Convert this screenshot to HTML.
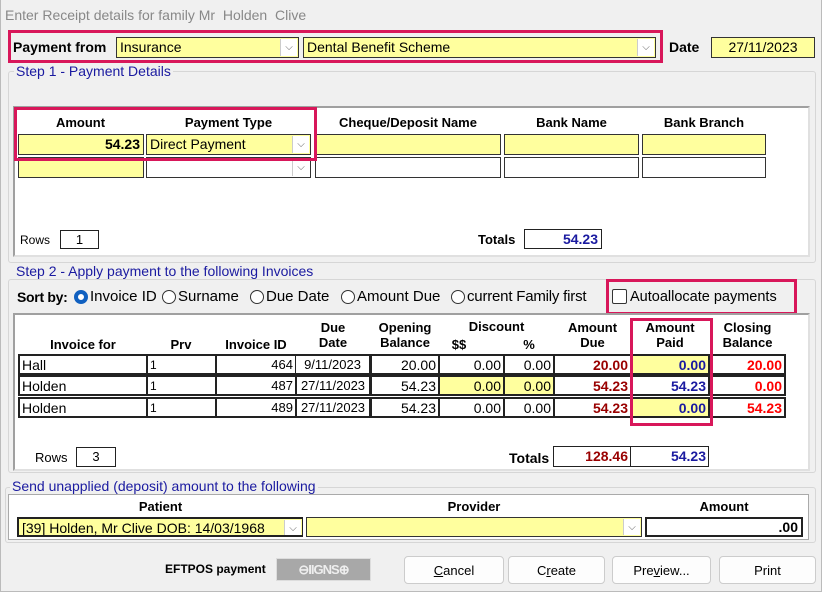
<!DOCTYPE html>
<html><head><style>
*{box-sizing:border-box;margin:0;padding:0}
body{width:822px;height:592px;background:#f0f0f0;font-family:"Liberation Sans",Arial,sans-serif;font-size:13px;color:#000;position:relative;overflow:hidden}
.a{position:absolute}
.f{position:absolute;border:1px solid #333;background:#ffff9e;height:21px;line-height:19px;padding:0 3px;font-size:14px;white-space:nowrap;overflow:hidden}
.w{background:#fff}
.dd{position:absolute;right:1px;top:1px;width:17px;height:17px;background:#fff;border-left:1px solid #ccc;color:#666;font-size:10px;text-align:center;line-height:17px}
.pink{position:absolute;border:3px solid #d8175a}
.grp{position:absolute;border:1px solid #d6d6d6;border-radius:3px}
.gl{position:absolute;color:#1a1aa0;font-size:14px;background:#f0f0f0;padding:0 2px}
.pan{position:absolute;background:#fff;border:2px solid #a0a0a0;border-right-color:#e0e0e0;border-bottom-color:#e0e0e0}
.h{position:absolute;font-weight:bold;font-size:13px;text-align:center}
.c{position:absolute;border:2px solid #222;height:21px;line-height:18px;font-size:14px;padding:0 2px;text-align:right;white-space:nowrap;overflow:hidden}
.btn{position:absolute;top:556px;height:28px;background:#fdfdfd;border:1px solid #ccc;border-radius:4px;text-align:center;line-height:27px;font-size:13px}
.rad{position:absolute;top:290px;width:14px;height:14px;border:1px solid #333;border-radius:50%;background:#fff}
.rt{position:absolute;top:288px;font-size:15px;white-space:nowrap}
</style></head><body>
<div class="a" style="left:0;top:0;width:822px;height:592px;border:1px solid #bbb;border-top:none"></div>
<div class="a" style="left:5px;top:7px;color:#888;font-size:14px">Enter Receipt details for family Mr&nbsp; Holden&nbsp; Clive</div>

<div class="pink" style="left:8px;top:30px;width:655px;height:33px"></div>
<div class="a" style="left:13px;top:39px;font-weight:bold;font-size:14px">Payment from</div>
<div class="f" style="left:116px;top:37px;width:183px">Insurance<div class="dd">⌵</div></div>
<div class="f" style="left:303px;top:37px;width:353px">Dental Benefit Scheme<div class="dd">⌵</div></div>
<div class="a" style="left:669px;top:39px;font-weight:bold;font-size:14px">Date</div>
<div class="f" style="left:711px;top:37px;width:104px;text-align:center">27/11/2023</div>

<div class="grp" style="left:8px;top:71px;width:808px;height:192px"></div>
<div class="gl" style="left:14px;top:63px">Step 1 - Payment Details</div>
<div class="pan" style="left:13px;top:106px;width:797px;height:151px"></div>
<div class="h" style="left:18px;top:115px;width:125px">Amount</div>
<div class="h" style="left:146px;top:115px;width:165px">Payment Type</div>
<div class="h" style="left:315px;top:115px;width:186px">Cheque/Deposit Name</div>
<div class="h" style="left:504px;top:115px;width:135px">Bank Name</div>
<div class="h" style="left:642px;top:115px;width:124px">Bank Branch</div>
<div class="f" style="left:18px;top:134px;width:126px;text-align:right;font-weight:bold">54.23</div>
<div class="f" style="left:146px;top:134px;width:165px">Direct Payment<div class="dd">⌵</div></div>
<div class="f" style="left:315px;top:134px;width:186px"></div>
<div class="f" style="left:504px;top:134px;width:135px"></div>
<div class="f" style="left:642px;top:134px;width:124px"></div>
<div class="f" style="left:18px;top:157px;width:126px"></div>
<div class="f w" style="left:146px;top:157px;width:165px"><div class="dd">⌵</div></div>
<div class="f w" style="left:315px;top:157px;width:186px"></div>
<div class="f w" style="left:504px;top:157px;width:135px"></div>
<div class="f w" style="left:642px;top:157px;width:124px"></div>
<div class="pink" style="left:14px;top:107px;width:303px;height:54px"></div>
<div class="a" style="left:20px;top:233px;font-size:12px">Rows</div>
<div class="a" style="left:60px;top:230px;width:39px;height:19px;border:1px solid #222;background:#fff;text-align:center;font-size:13px;line-height:17px">1</div>
<div class="a" style="left:478px;top:232px;font-weight:bold;font-size:13px">Totals</div>
<div class="a" style="left:524px;top:229px;width:78px;height:20px;border:1px solid #222;background:#fff;text-align:right;padding-right:3px;font-weight:bold;color:#1a1aa0;font-size:14px;line-height:18px">54.23</div>

<div class="grp" style="left:8px;top:279px;width:808px;height:194px"></div>
<div class="gl" style="left:14px;top:263px">Step 2 - Apply payment to the following Invoices</div>
<div class="rt" style="left:17px;top:289px;font-size:14px;font-weight:bold;letter-spacing:-0.3px">Sort by:</div>
<div class="rad" style="left:74px;border:4px solid #1060c0"></div><div class="rt" style="left:90px">Invoice ID</div>
<div class="rad" style="left:162px"></div><div class="rt" style="left:178px">Surname</div>
<div class="rad" style="left:250px"></div><div class="rt" style="left:266px">Due Date</div>
<div class="rad" style="left:341px"></div><div class="rt" style="left:357px">Amount Due</div>
<div class="rad" style="left:451px"></div><div class="rt" style="left:467px;letter-spacing:-0.2px">current Family first</div>
<div class="pink" style="left:606px;top:279px;width:191px;height:36px"></div>
<div class="a" style="left:612px;top:289px;width:15px;height:15px;border:1px solid #333;border-radius:2px;background:#fff"></div>
<div class="rt" style="left:630px;top:289px;font-size:14.5px">Autoallocate payments</div>
<div class="pan" style="left:13px;top:313px;width:797px;height:158px"></div>
<div class="h" style="left:19px;top:337px;width:128px">Invoice for</div>
<div class="h" style="left:147px;top:337px;width:68px">Prv</div>
<div class="h" style="left:216px;top:337px;width:80px">Invoice ID</div>
<div class="h" style="left:296px;top:320px;width:74px">Due<br>Date</div>
<div class="h" style="left:371px;top:320px;width:68px">Opening<br>Balance</div>
<div class="h" style="left:439px;top:319px;width:115px">Discount</div>
<div class="h" style="left:439px;top:337px;width:40px">$$</div>
<div class="h" style="left:504px;top:337px;width:50px">%</div>
<div class="h" style="left:554px;top:320px;width:77px">Amount<br>Due</div>
<div class="h" style="left:631px;top:320px;width:78px">Amount<br>Paid</div>
<div class="h" style="left:709px;top:320px;width:77px">Closing<br>Balance</div>

<div class="a" style="left:0;top:354px">
<div class="c w" style="left:18px;width:130px;text-align:left">Hall</div>
<div class="c w" style="left:146px;width:71px;text-align:left;font-size:12px">1</div>
<div class="c w" style="left:215px;width:82px;font-size:13px">464</div>
<div class="c w" style="left:295px;width:76px;border-left:1px solid #222;text-align:center;font-size:13px">9/11/2023</div>
<div class="c w" style="left:370px;width:70px">20.00</div>
<div class="c w" style="left:438px;width:67px">0.00</div>
<div class="c w" style="left:503px;width:52px">0.00</div>
<div class="c w" style="left:553px;width:79px;color:#900;font-weight:bold">20.00</div>
<div class="c" style="left:630px;width:80px;background:#ffff9e;color:#1a1aa0;font-weight:bold">0.00</div>
<div class="c w" style="left:708px;width:78px;color:#f00;font-weight:bold">20.00</div>
</div>
<div class="a" style="left:0;top:375px">
<div class="c w" style="left:18px;width:130px;text-align:left">Holden</div>
<div class="c w" style="left:146px;width:71px;text-align:left;font-size:12px">1</div>
<div class="c w" style="left:215px;width:82px;font-size:13px">487</div>
<div class="c w" style="left:295px;width:76px;text-align:center;font-size:13px">27/11/2023</div>
<div class="c w" style="left:370px;width:70px">54.23</div>
<div class="c" style="left:438px;width:67px;background:#ffff9e">0.00</div>
<div class="c" style="left:503px;width:52px;background:#ffff9e">0.00</div>
<div class="c w" style="left:553px;width:79px;color:#900;font-weight:bold">54.23</div>
<div class="c w" style="left:630px;width:80px;color:#1a1aa0;font-weight:bold">54.23</div>
<div class="c w" style="left:708px;width:78px;color:#f00;font-weight:bold">0.00</div>
</div>
<div class="a" style="left:0;top:397px">
<div class="c w" style="left:18px;width:130px;text-align:left">Holden</div>
<div class="c w" style="left:146px;width:71px;text-align:left;font-size:12px">1</div>
<div class="c w" style="left:215px;width:82px;font-size:13px">489</div>
<div class="c w" style="left:295px;width:76px;text-align:center;font-size:13px">27/11/2023</div>
<div class="c w" style="left:370px;width:70px">54.23</div>
<div class="c w" style="left:438px;width:67px">0.00</div>
<div class="c w" style="left:503px;width:52px">0.00</div>
<div class="c w" style="left:553px;width:79px;color:#900;font-weight:bold">54.23</div>
<div class="c" style="left:630px;width:80px;background:#ffff9e;color:#1a1aa0;font-weight:bold">0.00</div>
<div class="c w" style="left:708px;width:78px;color:#f00;font-weight:bold">54.23</div>
</div>
<div class="pink" style="left:630px;top:318px;width:83px;height:108px"></div>
<div class="a" style="left:35px;top:450px;font-size:13px">Rows</div>
<div class="a" style="left:76px;top:447px;width:40px;height:20px;border:1px solid #222;background:#fff;text-align:center;line-height:18px">3</div>
<div class="a" style="left:509px;top:450px;font-weight:bold;font-size:14px">Totals</div>
<div class="a" style="left:553px;top:446px;width:78px;height:21px;border:1px solid #222;background:#fff;text-align:right;padding-right:2px;font-weight:bold;color:#900;font-size:14px;line-height:19px">128.46</div>
<div class="a" style="left:630px;top:446px;width:79px;height:21px;border:1px solid #222;background:#fff;text-align:right;padding-right:2px;font-weight:bold;color:#1a1aa0;font-size:14px;line-height:19px">54.23</div>

<div class="grp" style="left:5px;top:487px;width:811px;height:56px"></div>
<div class="gl" style="left:10px;top:478px">Send unapplied (deposit) amount to the following</div>
<div class="pan" style="left:8px;top:494px;width:801px;height:46px;border:1px solid #aaa"></div>
<div class="h" style="left:18px;top:499px;width:285px">Patient</div>
<div class="h" style="left:306px;top:499px;width:336px">Provider</div>
<div class="h" style="left:645px;top:499px;width:158px">Amount</div>
<div class="f" style="left:17px;top:517px;width:286px;height:20px;line-height:18px;border:2px solid #222;border-right-width:1px">[39] Holden, Mr Clive DOB: 14/03/1968<div class="dd" style="height:15px">⌵</div></div>
<div class="f" style="left:306px;top:517px;width:336px;height:20px"><div class="dd" style="height:16px">⌵</div></div>
<div class="f w" style="left:645px;top:517px;width:158px;height:20px;line-height:17px;border:2px solid #222;text-align:right;font-weight:bold">.00</div>

<div class="a" style="left:165px;top:562px;font-weight:bold;font-size:12px">EFTPOS payment</div>
<div class="a" style="left:276px;top:558px;width:95px;height:23px;background:#a8a8a8;border:1px solid #ddd;color:#eee;font-weight:bold;font-size:13px;text-align:center;line-height:21px;letter-spacing:-1px">⊖IIGNS⊕</div>
<div class="btn" style="left:404px;width:100px"><u>C</u>ancel</div>
<div class="btn" style="left:508px;width:97px">C<u>r</u>eate</div>
<div class="btn" style="left:612px;width:99px">Pre<u>v</u>iew...</div>
<div class="btn" style="left:719px;width:97px">Print</div>
</body></html>
